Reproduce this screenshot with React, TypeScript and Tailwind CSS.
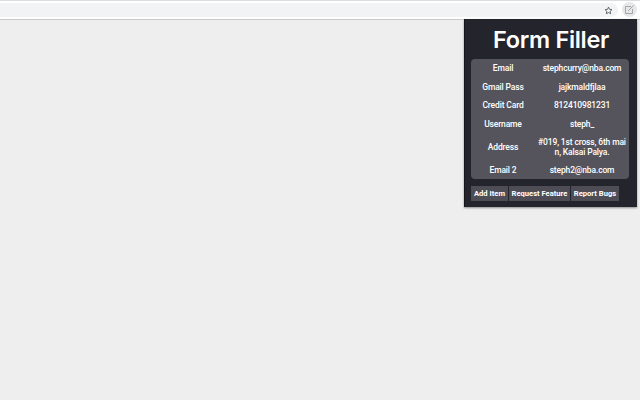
import React from "react";

const rows: [string, React.ReactNode, string][] = [
  ["Email", "stephcurry@nba.com", "h-[18px]"],
  ["Gmail Pass", "jajkmaldfjlaa", "h-[19px]"],
  ["Credit Card", "812410981231", "h-[18px]"],
  ["Username", "steph_", "h-[19px]"],
  ["Address", <>#019, 1st cross, 6th mai<br />n, Kalsai Palya.</>, "h-[28px]"],
  ["Email 2", "steph2@nba.com", "h-[18px]"],
];

export default function App() {
  return (
    <div className="relative w-[640px] h-[400px] overflow-hidden bg-[#eeeeee] font-['Roboto',sans-serif]">
      <div className="h-[20px] flex flex-col bg-white border-b border-[#c9c9c9]">
        <div className="h-px bg-[#dadce0]" />
        <div className="flex items-start pt-[2px]">
          <div className="flex-1 h-[14px] bg-[#f1f3f4] rounded-r-[7px] mr-[22px] relative flex justify-end items-center pr-[2px]">
            <svg width="9" height="9" viewBox="0 0 24 24" className="mr-[3px]" fill="none" stroke="#55585c" strokeWidth="2.4" strokeLinejoin="round">
              <path d="M12 3l2.8 5.9 6.4.8-4.7 4.4 1.2 6.4L12 17.4l-5.7 3.1 1.2-6.4-4.7-4.4 6.4-.8z" />
            </svg>
          </div>
        </div>
        <div className="absolute left-[622px] top-[2px] w-[15px] h-[15px] rounded-full bg-[#e6e7e9] flex items-center justify-center">
          <svg width="11" height="11" viewBox="0 0 11 11" fill="none" stroke="#a3a6aa" strokeWidth="1">
            <path d="M7 2.5H1.5v7h7V5" />
            <path d="M4 7l5.5-5.5" />
          </svg>
        </div>
      </div>

      <div className="absolute left-[464px] top-[19px] w-[173px] h-[188px] bg-[#24242c] border-l border-[#15151a] shadow-[0_1px_2px_rgba(0,0,0,0.4)] px-[6px] flex flex-col">
        <div className="h-[40px] shrink-0 flex items-center justify-center text-white text-[23.5px] font-semibold leading-none tracking-[-0.3px] font-['Inter',sans-serif] pt-[2px]">
          Form Filler
        </div>
        <div className="w-[158px] h-[120px] shrink-0 bg-[#55545c] rounded-[4px] flex flex-col text-white text-[8.5px] font-medium tracking-[-0.15px] leading-[10px]">
          {rows.map(([label, value, h], i) => (
            <div key={i} className={`flex items-center ${h}`}>
              <div className="w-[64px] text-center shrink-0">{label}</div>
              <div className="w-[94px] text-center shrink-0 whitespace-nowrap">{value}</div>
            </div>
          ))}
        </div>
        <div className="flex gap-[1px] mt-[7px] text-[7.6px] font-bold text-white leading-none">
          <div className="w-[37px] h-[15px] bg-[#4e4d55] flex items-center justify-center">Add Item</div>
          <div className="w-[61px] h-[15px] bg-[#4e4d55] flex items-center justify-center">Request Feature</div>
          <div className="w-[48px] h-[15px] bg-[#4e4d55] flex items-center justify-center">Report Bugs</div>
        </div>
      </div>
    </div>
  );
}
